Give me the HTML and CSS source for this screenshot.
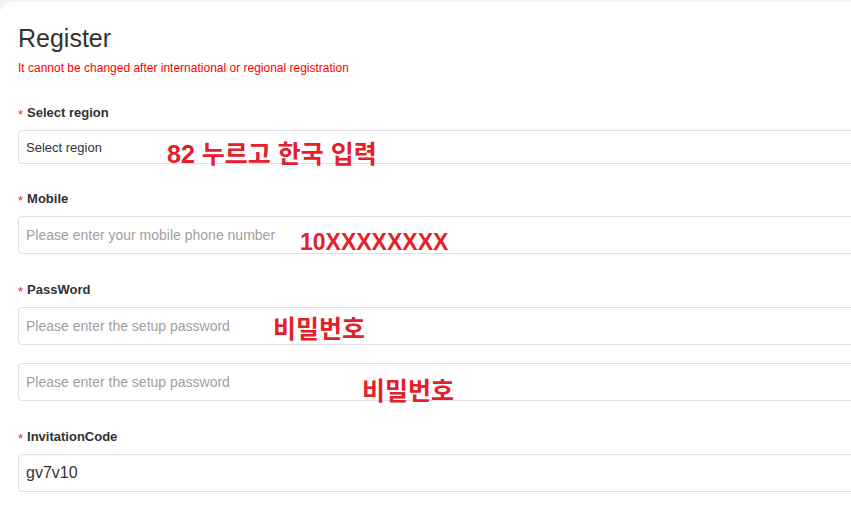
FILE: index.html
```html
<!DOCTYPE html>
<html lang="en">
<head>
  <meta charset="UTF-8" />
  <meta name="viewport" content="width=device-width, initial-scale=1.0" />
  <title>Register</title>
  <link rel="stylesheet" href="styles.css">
</head>
<body>
  <main class="card">
    <h1>Register</h1>
    <p class="tip">It cannot be changed after international or regional registration</p>

    <div class="form-item first">
      <label for="region"><span class="req">*</span>Select region</label>
      <div class="field small">
        <input id="region" type="text" value="Select region" readonly />
        <span class="note note-region">82 누르고 한국 입력</span>
      </div>
    </div>

    <div class="form-item">
      <label for="mobile"><span class="req">*</span>Mobile</label>
      <div class="field">
        <input id="mobile" type="text" placeholder="Please enter your mobile phone number" />
        <span class="note note-mobile">10XXXXXXXX</span>
      </div>
    </div>

    <div class="form-item">
      <label for="password"><span class="req">*</span>PassWord</label>
      <div class="field">
        <input id="password" type="password" placeholder="Please enter the setup password" />
        <span class="note note-pass">비밀번호</span>
      </div>
      <div class="field">
        <input id="password2" type="password" placeholder="Please enter the setup password" />
        <span class="note note-pass2">비밀번호</span>
      </div>
    </div>

    <div class="form-item">
      <label for="code"><span class="req">*</span>InvitationCode</label>
      <div class="field big">
        <input id="code" type="text" value="gv7v10" />
      </div>
    </div>
  </main>
</body>
</html>
```

FILE: styles.css
```css
body {
  margin: 0;
  background: #f2f2f2;
  font-family: "Liberation Sans", Arial, sans-serif;
  overflow: hidden;
}

.card {
  margin-top: 2px;
  width: 900px;
  min-height: 522px;
  box-sizing: border-box;
  padding: 22px 0 0 18px;
  background: #fff;
  border-radius: 12px 0 0 0;
}

h1 {
  margin: 0 0 8px;
  font-size: 25px;
  font-weight: normal;
  line-height: 28px;
  color: #333;
}

.tip {
  margin: 0 0 27px;
  font-size: 12px;
  line-height: 16px;
  color: #f00;
}

.form-item {
  margin-bottom: 26px;
}

.form-item.first {
  margin-bottom: 25px;
}

.form-item label {
  display: block;
  height: 20px;
  margin-bottom: 7px;
  font-size: 13px;
  line-height: 20px;
  font-weight: bold;
  color: #303133;
}

.req {
  margin-right: 4px;
  font-size: 13px;
  line-height: 1;
  font-weight: normal;
  color: #f5222d;
  vertical-align: -2px;
}

.field {
  position: relative;
}

.field + .field {
  margin-top: 18px;
}

.field input {
  display: block;
  width: 100%;
  height: 38px;
  box-sizing: border-box;
  padding: 0 7px;
  border: 1px solid #dcdfe6;
  border-radius: 4px;
  font-family: inherit;
  font-size: 14px;
  color: #333;
  outline: none;
}

.field input::placeholder {
  color: #a0a0a0;
}

.field.small input {
  height: 34px;
  font-size: 13px;
}

.field.big input {
  font-size: 16px;
}

.note {
  position: absolute;
  font-family: "Liberation Sans", "Noto Sans CJK KR", sans-serif;
  font-size: 25px;
  line-height: 25px;
  font-weight: bold;
  color: #e4202b;
  white-space: nowrap;
}

.note-region {
  left: 149px;
  top: 12px;
}

.note-mobile {
  left: 282px;
  top: 15px;
  font-size: 23px;
  line-height: 23px;
}

.note-pass {
  left: 255px;
  top: 10px;
}

.note-pass2 {
  left: 344px;
  top: 16px;
}
```
